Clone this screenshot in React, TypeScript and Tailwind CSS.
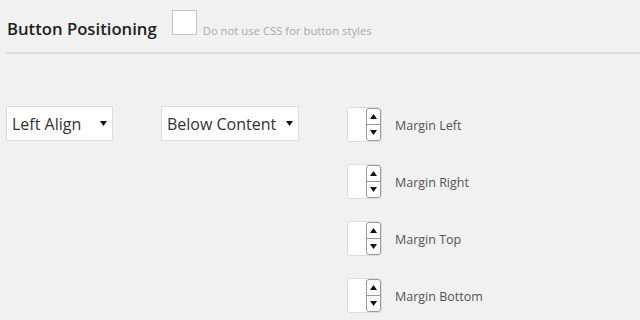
const FONT = "font-['Open_Sans','Liberation_Sans',sans-serif]";

const MARGINS = ['Margin Left', 'Margin Right', 'Margin Top', 'Margin Bottom'];

function Caret({ up = false }: { up?: boolean }) {
  return (
    <svg width="7" height="5" viewBox="0 0 7 5" aria-hidden>
      <polygon points={up ? '0,5 7,5 3.5,0' : '0,0 7,0 3.5,5'} fill="#111" />
    </svg>
  );
}

function SelectBox({ label, width }: { label: string; width: string }) {
  return (
    <div
      className={`flex h-[35px] ${width} items-center justify-between border border-[#dddddd] bg-white pl-[5px] pr-[5px]`}
    >
      <span className="text-[16px] leading-none text-[#333]">{label}</span>
      <Caret />
    </div>
  );
}

function Spinner({ label }: { label: string }) {
  return (
    <div className="flex h-[35px] items-center">
      <div className="flex h-[35px] w-[35px] justify-end rounded-[3px] border border-[#dddddd] bg-white">
        <div className="flex w-[15px] flex-col rounded-[3px] border border-[#999]">
          <div className="flex flex-1 items-center justify-center border-b border-[#999]">
            <Caret up />
          </div>
          <div className="flex flex-1 items-center justify-center">
            <Caret />
          </div>
        </div>
      </div>
      <span className="ml-[13px] mt-[4px] text-[12.5px] text-[#555]">{label}</span>
    </div>
  );
}

export default function App() {
  return (
    <div className={`h-[320px] w-[640px] overflow-hidden bg-[#f1f1f1] ${FONT}`}>
      <div className="flex h-[52px] items-baseline pl-[7px] pt-[10px]">
        <h2 className="text-[16.7px] font-semibold leading-[24px] text-[#222]">
          Button Positioning
        </h2>
        <div className="ml-[15px] h-[25px] w-[25px] border border-[#c4c4c4] bg-white" />
        <span className="ml-[6px] text-[11.3px] text-[#aaa]">Do not use CSS for button styles</span>
      </div>
      <div className="ml-[6px] h-[2px] bg-[#dddddd]" />

      <div className="flex items-start pl-[6px] pt-[52px]">
        <SelectBox label="Left Align" width="w-[107px]" />
        <div className="ml-[48px]">
          <SelectBox label="Below Content" width="w-[138px]" />
        </div>
        <div className="ml-[48px] mt-[1px] flex flex-col gap-[22px]">
          {MARGINS.map((m) => (
            <Spinner key={m} label={m} />
          ))}
        </div>
      </div>
    </div>
  );
}
